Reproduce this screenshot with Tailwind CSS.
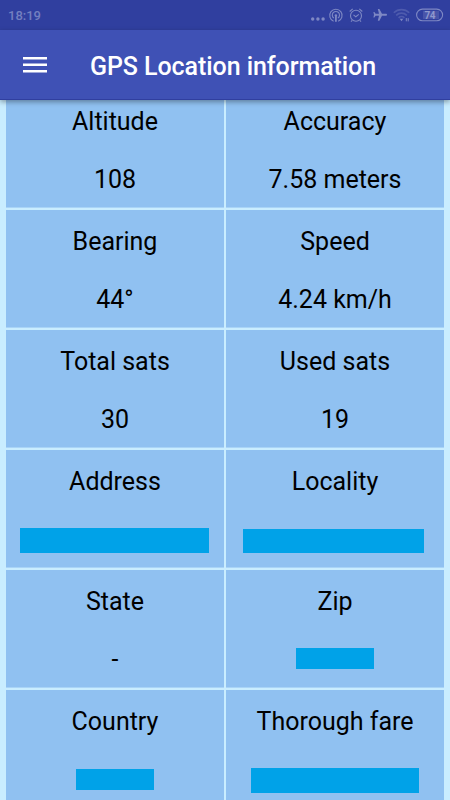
<!DOCTYPE html>
<html lang="en">
<head>
  <meta charset="UTF-8" />
  <meta name="viewport" content="width=device-width, initial-scale=1.0"/>
  <title>GPS Location information</title>
  <script src="https://cdn.jsdelivr.net/npm/@tailwindcss/browser@4"></script>
</head>
<body class="h-[800px] w-[450px] overflow-hidden bg-[#c9edff] font-[Roboto,sans-serif] text-black">

  <!-- STATUS BAR -->
  <div class="flex h-[30px] justify-between bg-[#303f9f] pl-2 text-[#7e88c4]">
    <span class="text-[13px] leading-[31px] font-medium text-[#747fc0]">18:19</span>
    <svg class="h-[30px] w-[150px]" viewBox="0 0 150 30" fill="none" stroke="currentColor" stroke-width="1.1">
      <g fill="currentColor" stroke="none">
        <circle cx="12.7" cy="19" r="1.7"/>
        <circle cx="17.9" cy="19" r="1.7"/>
        <circle cx="23.1" cy="19" r="1.7"/>
      </g>
      <!-- hotspot -->
      <path d="M33.6 21.2a6.2 6.2 0 1 1 4.6 0M33.9 18.1a3.6 3.6 0 1 1 4 0"/>
      <circle cx="35.9" cy="15.4" r="1.2" fill="currentColor" stroke="none"/>
      <path d="M35.9 16v5.8" stroke-width="1.8"/>
      <!-- alarm -->
      <circle cx="56" cy="15.8" r="5.5"/>
      <path d="M49.7 11.5l3-2.6M62.3 11.5l-3-2.6M53.5 14.8l2.3 2 3-2.4M52.2 20.3l-1.2 1.4M59.8 20.3l1.2 1.4"/>
      <!-- airplane -->
      <path d="M87 14.8c0-.7-.5-1-1.3-1H82l-2.6-4.9h-1.6l1.2 4.9h-3.4l-1.2-1.7h-1l.6 2.7-.6 2.7h1l1.2-1.7H79l-1.2 4.9h1.6l2.6-4.9h3.7c.8 0 1.3-.3 1.3-1z" fill="currentColor" stroke="none"/>
      <!-- wifi -->
      <g stroke="#4e5bae" stroke-width="1.6">
        <path d="M93.8 12.8a11 11 0 0 1 15.4 0M96.2 15.4a7.4 7.4 0 0 1 10.6 0M98.6 17.8a4.2 4.2 0 0 1 5.8 0"/>
      </g>
      <path d="M99.7 18.8h3.6l-1.8 2.4z" fill="currentColor" stroke="none"/>
      <path d="M106.3 21.3v-3.2M108.2 18.2v3.2" stroke-width="1"/>
      <!-- battery -->
      <rect x="116.6" y="9.1" width="26" height="11.6" rx="5.8"/>
      <rect x="123" y="10.8" width="16" height="8.2" fill="#4854a9" stroke="none"/>
      <text x="129.8" y="18.6" text-anchor="middle" font-size="10" font-weight="700" letter-spacing="-0.4" fill="#8f98cd" stroke="none">74</text>
    </svg>
  </div>

  <!-- APP BAR -->
  <header class="relative z-10 flex h-[70px] items-center border-b border-[#303f9f] bg-[#3f51b5] pl-[23px] text-white shadow-[0_2px_5px_rgba(0,0,0,0.35)]">
    <svg class="h-[18px] w-6" viewBox="0 0 24 18" fill="currentColor">
      <path d="M0 1h24v2.6H0zM0 7.5h24v2.6H0zM0 14h24v2.6H0z"/>
    </svg>
    <h1 class="ml-[43px] pt-1 text-[25px] leading-8 font-medium tracking-[-0.07px] whitespace-nowrap">GPS Location information</h1>
  </header>

  <!-- DATA GRID, first row starts under the app bar -->
  <main class="-mt-[10px] grid grid-cols-2 gap-[2px] px-[6px] text-center text-[25px] leading-[59px]">
    <div class="h-[118px] border-b border-[#a9d4f7] bg-[#90c1f1] pt-[2px]">
      <h2>Altitude</h2>
      <p class="leading-[57px]">108</p>
    </div>
    <div class="h-[118px] border-b border-[#a9d4f7] bg-[#90c1f1] pt-[2px]">
      <h2>Accuracy</h2>
      <p class="leading-[57px]">7.58 meters</p>
    </div>
    <div class="h-[118px] border-b border-[#a9d4f7] bg-[#90c1f1] pt-[2px]">
      <h2>Bearing</h2>
      <p class="leading-[57px]">44°</p>
    </div>
    <div class="h-[118px] border-b border-[#a9d4f7] bg-[#90c1f1] pt-[2px]">
      <h2>Speed</h2>
      <p class="leading-[57px]">4.24 km/h</p>
    </div>
    <div class="h-[118px] border-b border-[#a9d4f7] bg-[#90c1f1] pt-[2px]">
      <h2>Total sats</h2>
      <p class="leading-[57px]">30</p>
    </div>
    <div class="h-[118px] border-b border-[#a9d4f7] bg-[#90c1f1] pt-[2px]">
      <h2>Used sats</h2>
      <p class="leading-[57px]">19</p>
    </div>
    <div class="h-[118px] border-b border-[#a9d4f7] bg-[#90c1f1] pt-[2px]">
      <h2>Address</h2>
      <div class="mt-[17px] ml-[14px] h-[25px] w-[189px] bg-[#00a2e8]"></div>
    </div>
    <div class="h-[118px] border-b border-[#a9d4f7] bg-[#90c1f1] pt-[2px]">
      <h2>Locality</h2>
      <div class="mt-[18px] ml-[17px] h-6 w-[181px] bg-[#00a2e8]"></div>
    </div>
    <div class="h-[118px] border-b border-[#a9d4f7] bg-[#90c1f1] pt-[2px]">
      <h2>State</h2>
      <p class="leading-[57px]">-</p>
    </div>
    <div class="h-[118px] border-b border-[#a9d4f7] bg-[#90c1f1] pt-[2px]">
      <h2>Zip</h2>
      <div class="mt-[17px] ml-[70px] h-[21px] w-[78px] bg-[#00a2e8]"></div>
    </div>
    <div class="h-[118px] border-b border-[#a9d4f7] bg-[#90c1f1] pt-[2px]">
      <h2>Country</h2>
      <div class="mt-[18px] ml-[70px] h-[21px] w-[78px] bg-[#00a2e8]"></div>
    </div>
    <div class="h-[118px] border-b border-[#a9d4f7] bg-[#90c1f1] pt-[2px]">
      <h2>Thorough fare</h2>
      <div class="mt-[17px] ml-[25px] h-[25px] w-[168px] bg-[#00a2e8]"></div>
    </div>
  </main>

</body>
</html>
